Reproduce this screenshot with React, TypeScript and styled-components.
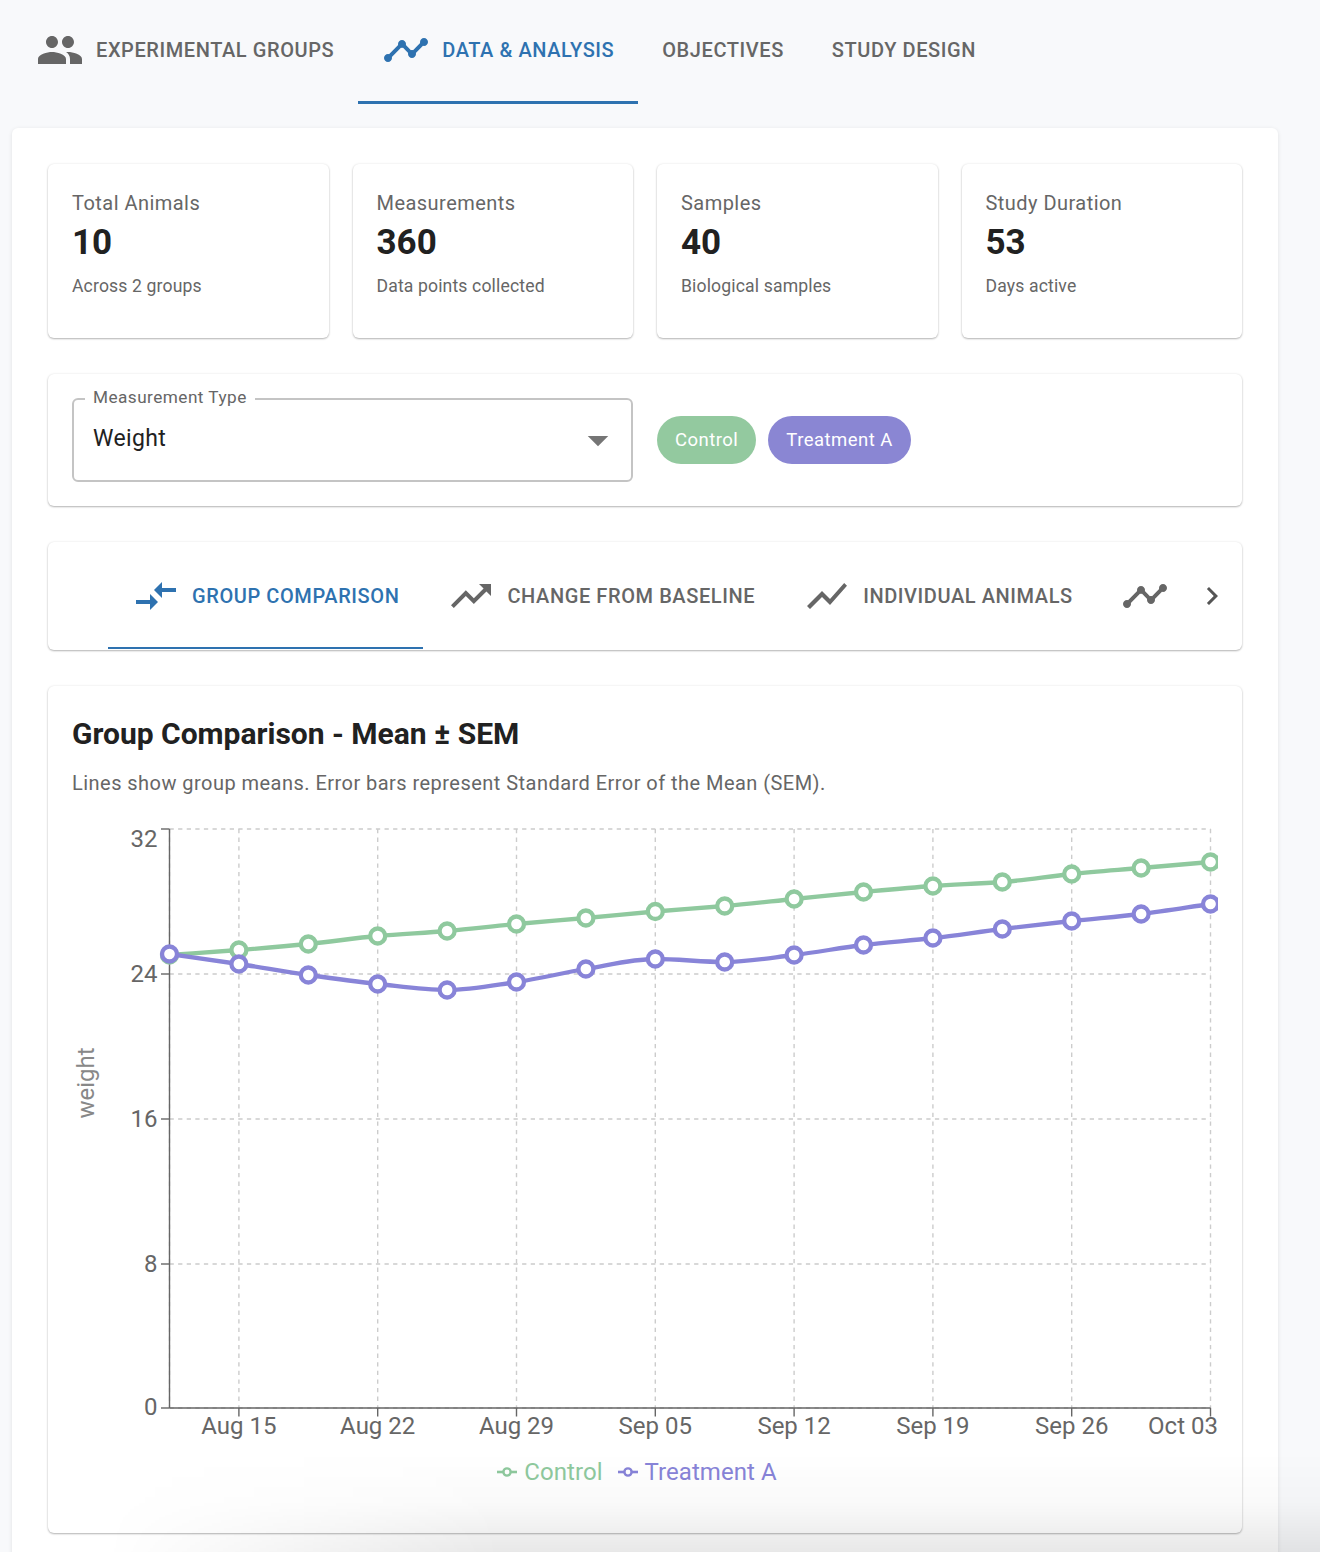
import React from "react";
import styled, { createGlobalStyle } from "styled-components";
import { MdArrowDropDown, MdChevronRight, MdCompareArrows, MdPeople, MdShowChart, MdTimeline, MdTrendingUp } from "react-icons/md";

const GREEN = "#8fc99e";
const PURPLE = "#8884d8";

const stats = [
  { label: "Total Animals", value: "10", note: "Across 2 groups" },
  { label: "Measurements", value: "360", note: "Data points collected" },
  { label: "Samples", value: "40", note: "Biological samples" },
  { label: "Study Duration", value: "53", note: "Days active" },
];

const controlY = [955, 950, 944, 936, 931, 924, 918, 911.5, 906, 899, 892, 886, 882, 874, 868, 862];
const treatmentY = [954, 964, 975, 984, 990, 982, 969, 959, 962, 955, 945, 938, 929, 921, 914, 904];

// chart coordinates are relative to the svg, which starts at (72, 820)
const X0 = 97.5;
const STEP = 69.4;
const TOP = 9;
const BOTTOM = 588;
const xAt = (i: number) => X0 + i * STEP;

// monotone cubic through the points, same curve recharts draws
function monotonePath(pts: number[][]) {
  const n = pts.length;
  const slopes: number[] = [];
  for (let i = 0; i < n - 1; i++) slopes.push((pts[i + 1][1] - pts[i][1]) / (pts[i + 1][0] - pts[i][0]));
  const t = pts.map((_, i) => {
    if (i === 0) return slopes[0];
    if (i === n - 1) return slopes[n - 2];
    if (slopes[i - 1] * slopes[i] <= 0) return 0;
    return (2 * slopes[i - 1] * slopes[i]) / (slopes[i - 1] + slopes[i]);
  });
  let d = `M${pts[0][0]},${pts[0][1]}`;
  for (let i = 0; i < n - 1; i++) {
    const h = (pts[i + 1][0] - pts[i][0]) / 3;
    d += `C${pts[i][0] + h},${pts[i][1] + t[i] * h} ${pts[i + 1][0] - h},${pts[i + 1][1] - t[i + 1] * h} ${pts[i + 1][0]},${pts[i + 1][1]}`;
  }
  return d;
}

const yTicks = [
  { label: "32", y: 9, dy: 10 },
  { label: "24", y: 154, dy: 0 },
  { label: "16", y: 299, dy: 0 },
  { label: "8", y: 444, dy: 0 },
  { label: "0", y: 588, dy: -1 },
];
const xTicks = [
  { label: "Aug 15", i: 1 },
  { label: "Aug 22", i: 3 },
  { label: "Aug 29", i: 5 },
  { label: "Sep 05", i: 7 },
  { label: "Sep 12", i: 9 },
  { label: "Sep 19", i: 11 },
  { label: "Sep 26", i: 13 },
  { label: "Oct 03", i: 15 },
];

function Series({ ys, color }: { ys: number[]; color: string }) {
  const pts = ys.map((y, i) => [xAt(i), y - 820]);
  return (
    <g>
      <path d={monotonePath(pts)} fill="none" stroke={color} strokeWidth={4.3} />
      {pts.map((p) => (
        <circle key={p[0]} cx={p[0]} cy={p[1]} r={7.5} fill="#fff" stroke={color} strokeWidth={4.3} />
      ))}
    </g>
  );
}

function Chart() {
  return (
    <ChartSvg width={1146} height={670} viewBox="0 0 1146 670">
      <g stroke="#ccc" strokeWidth={1.4} strokeDasharray="4.3 4.3">
        {yTicks.map((t) => (
          <line key={t.label} x1={X0} x2={xAt(15)} y1={t.y} y2={t.y} />
        ))}
        <line x1={X0} x2={X0} y1={TOP} y2={BOTTOM} />
        {xTicks.map((t) => (
          <line key={t.label} x1={xAt(t.i)} x2={xAt(t.i)} y1={TOP} y2={BOTTOM} />
        ))}
      </g>
      <g stroke="#666" strokeWidth={1.4}>
        <line x1={X0} x2={X0} y1={TOP} y2={BOTTOM} />
        <line x1={X0} x2={xAt(15)} y1={BOTTOM} y2={BOTTOM} />
        {yTicks.map((t) => (
          <line key={t.label} x1={X0 - 8.5} x2={X0} y1={t.y} y2={t.y} />
        ))}
        {xTicks.map((t) => (
          <line key={t.label} x1={xAt(t.i)} x2={xAt(t.i)} y1={BOTTOM} y2={BOTTOM + 8.5} />
        ))}
      </g>
      {yTicks.map((t) => (
        <AxisText key={t.label} x={X0 - 12} y={t.y + t.dy + 8} textAnchor="end">
          {t.label}
        </AxisText>
      ))}
      {xTicks.map((t) => (
        <AxisText key={t.label} x={t.i === 15 ? xAt(15) - 27.5 : xAt(t.i)} y={614} textAnchor="middle">
          {t.label}
        </AxisText>
      ))}
      <AxisTitle x={0} y={0} textAnchor="middle" transform="translate(22 263) rotate(-90)">
        weight
      </AxisTitle>
      <Series ys={controlY} color={GREEN} />
      <Series ys={treatmentY} color={PURPLE} />
    </ChartSvg>
  );
}

function LegendMark({ color }: { color: string }) {
  return (
    <svg width={20} height={12} viewBox="0 0 20 12">
      <line x1={0} x2={20} y1={6} y2={6} stroke={color} strokeWidth={2.6} />
      <circle cx={10} cy={6} r={3.6} fill="#fff" stroke={color} strokeWidth={2.4} />
    </svg>
  );
}

export default function App() {
  return (
    <>
      <GlobalStyle />
      <Page>
        <MainTabs>
          <MainTab>
            <MdPeople />
            Experimental Groups
          </MainTab>
          <MainTab $active>
            <MdTimeline />
            Data &amp; Analysis
          </MainTab>
          <MainTab>Objectives</MainTab>
          <MainTab>Study Design</MainTab>
        </MainTabs>

        <Sheet>
          <StatGrid>
            {stats.map((s) => (
              <StatCard key={s.label}>
                <StatLabel>{s.label}</StatLabel>
                <StatValue>{s.value}</StatValue>
                <StatNote>{s.note}</StatNote>
              </StatCard>
            ))}
          </StatGrid>

          <FilterCard>
            <SelectBox>
              <SelectLegend>Measurement Type</SelectLegend>
              <SelectValue>Weight</SelectValue>
              <MdArrowDropDown />
            </SelectBox>
            <Chips>
              <Chip $color="#93c99f">Control</Chip>
              <Chip $color="#8a86d3">Treatment A</Chip>
            </Chips>
          </FilterCard>

          <SubTabCard>
            <ScrollSpacer />
            <SubTabs>
              <SubTab $active>
                <MdCompareArrows />
                Group Comparison
              </SubTab>
              <SubTab>
                <MdTrendingUp />
                Change from Baseline
              </SubTab>
              <SubTab>
                <MdShowChart />
                Individual Animals
              </SubTab>
              <SubTab>
                <MdTimeline />
              </SubTab>
            </SubTabs>
            <ScrollButton>
              <MdChevronRight />
            </ScrollButton>
          </SubTabCard>

          <ChartCard>
            <ChartTitle>Group Comparison - Mean ± SEM</ChartTitle>
            <ChartNote>Lines show group means. Error bars represent Standard Error of the Mean (SEM).</ChartNote>
            <Chart />
            <Legend>
              <LegendItem $color={GREEN}>
                <LegendMark color={GREEN} />
                Control
              </LegendItem>
              <LegendItem $color={PURPLE}>
                <LegendMark color={PURPLE} />
                Treatment A
              </LegendItem>
            </Legend>
          </ChartCard>
        </Sheet>
        <BottomShade />
      </Page>
    </>
  );
}

const GlobalStyle = createGlobalStyle`
  html, body {
    margin: 0;
    padding: 0;
    background: #f8f9fb;
    font-family: Roboto, "Liberation Sans", sans-serif;
  }
`;

const Page = styled.div`
  position: relative;
  width: 1320px;
  height: 1552px;
  overflow: hidden;
  box-sizing: border-box;
  padding: 0 42px 0 12px;
`;

const MainTabs = styled.div`
  display: flex;
  height: 104px;
  margin-bottom: 24px;
`;

const MainTab = styled.div<{ $active?: boolean }>`
  display: flex;
  align-items: center;
  gap: 12px;
  box-sizing: border-box;
  height: 104px;
  padding: 0 24px 4px;
  font-size: 20px;
  font-weight: 500;
  letter-spacing: 0.58px;
  text-transform: uppercase;
  color: ${(p) => (p.$active ? "#2e72b0" : "#666")};
  box-shadow: ${(p) => (p.$active ? "inset 0 -3px 0 #2e72b0" : "none")};

  svg {
    width: 48px;
    height: 48px;
  }
`;

const Sheet = styled.div`
  display: flex;
  flex-direction: column;
  gap: 36px;
  padding: 36px;
  height: 1500px;
  box-sizing: border-box;
  background: #fff;
  border-radius: 6px;
  box-shadow: 0 1px 4px rgba(0, 0, 0, 0.1);
`;

const Card = styled.div`
  background: #fff;
  border-radius: 6px;
  box-sizing: border-box;
  box-shadow: 0 1px 2px rgba(0, 0, 0, 0.28), 0 0 3px rgba(0, 0, 0, 0.07);
`;

const StatGrid = styled.div`
  display: grid;
  grid-template-columns: repeat(4, 1fr);
  gap: 24px;
`;

const StatCard = styled(Card)`
  height: 174px;
  padding: 24px 24px 0;
`;

const StatLabel = styled.div`
  font-size: 20px;
  line-height: 30px;
  letter-spacing: 0.46px;
  color: #666;
`;

const StatValue = styled.div`
  margin-top: 1px;
  font-size: 35px;
  font-weight: 700;
  line-height: 48px;
  color: #212121;
`;

const StatNote = styled.div`
  margin-top: 4px;
  font-size: 17.6px;
  line-height: 30px;
  letter-spacing: 0.14px;
  color: #666;
`;

const FilterCard = styled(Card)`
  display: flex;
  align-items: center;
  gap: 24px;
  height: 132px;
  padding: 0 24px;
`;

const SelectBox = styled.div`
  position: relative;
  display: flex;
  align-items: center;
  justify-content: space-between;
  box-sizing: border-box;
  width: 561px;
  height: 84px;
  padding: 0 16px 4px 19px;
  border: 2px solid #c4c4c4;
  border-radius: 6px;

  svg {
    width: 34px;
    height: 34px;
    margin-top: 4px;
    color: #757575;
    transform: scale(1.45);
  }
`;

const SelectLegend = styled.span`
  position: absolute;
  left: 11px;
  top: -13px;
  padding: 0 8px;
  background: #fff;
  font-size: 17.2px;
  line-height: 20px;
  letter-spacing: 0.46px;
  color: #666;
`;

const SelectValue = styled.span`
  font-size: 23px;
  letter-spacing: 0.35px;
  color: #212121;
`;

const Chips = styled.div`
  display: flex;
  gap: 12px;
`;

const Chip = styled.span<{ $color: string }>`
  display: flex;
  align-items: center;
  height: 48px;
  padding: 0 18px;
  border-radius: 24px;
  font-size: 18.5px;
  letter-spacing: 0.47px;
  color: #fff;
  background: ${(p) => p.$color};
`;

const SubTabCard = styled(Card)`
  display: flex;
  height: 108px;
  overflow: hidden;
`;

const ScrollSpacer = styled.div`
  flex: 0 0 60px;
`;

const SubTabs = styled.div`
  display: flex;
  flex: 1;
  overflow: hidden;
`;

const SubTab = styled.div<{ $active?: boolean }>`
  display: flex;
  flex: none;
  align-items: center;
  gap: 12px;
  box-sizing: border-box;
  height: 107px;
  padding: 0 24px;
  font-size: 20px;
  font-weight: 500;
  letter-spacing: 0.59px;
  text-transform: uppercase;
  color: ${(p) => (p.$active ? "#2e72b0" : "#666")};
  box-shadow: ${(p) => (p.$active ? "inset 0 -2px 0 #2e72b0" : "none")};

  svg {
    width: 48px;
    height: 48px;
  }
`;

const ScrollButton = styled.div`
  display: flex;
  flex: 0 0 60px;
  align-items: center;
  justify-content: center;
  color: #555;

  svg {
    width: 36px;
    height: 36px;
  }
`;

const ChartCard = styled(Card)`
  height: 847px;
  padding: 24px;
`;

const ChartTitle = styled.h2`
  margin: 0;
  font-size: 30px;
  font-weight: 700;
  line-height: 48px;
  color: #212121;
`;

const ChartNote = styled.p`
  margin: 13px 0 0;
  font-size: 20px;
  line-height: 24px;
  letter-spacing: 0.46px;
  color: #666;
`;

const ChartSvg = styled.svg`
  display: block;
  margin-top: 25px;
  overflow: hidden;
`;

const AxisText = styled.text`
  font-size: 24px;
  fill: #666;
`;

const AxisTitle = styled.text`
  font-size: 24px;
  fill: #888;
`;

const Legend = styled.div`
  display: flex;
  justify-content: center;
  gap: 15px;
  margin-top: -32px;
  padding-right: 16px;
`;

const LegendItem = styled.div<{ $color: string }>`
  display: flex;
  align-items: center;
  gap: 7px;
  font-size: 24px;
  line-height: 28px;
  letter-spacing: 0.06px;
  color: ${(p) => p.$color};
`;

const BottomShade = styled.div`
  position: absolute;
  left: 0;
  right: 0;
  bottom: 0;
  height: 100px;
  pointer-events: none;
  background: linear-gradient(to bottom, rgba(0, 0, 0, 0), rgba(0, 0, 0, 0.02) 50%, rgba(0, 0, 0, 0.09));
  -webkit-mask-image: linear-gradient(to right, transparent 8%, #000 38%);
  mask-image: linear-gradient(to right, transparent 8%, #000 38%);
`;
